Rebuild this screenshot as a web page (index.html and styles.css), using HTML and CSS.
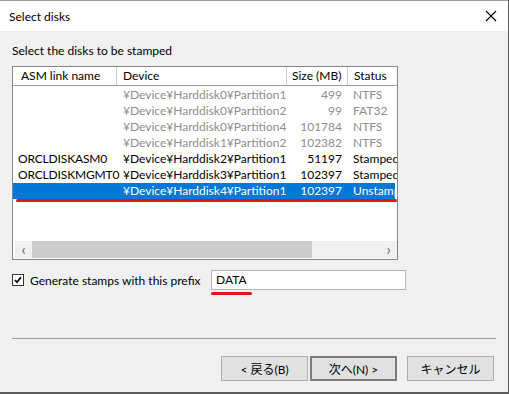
FILE: index.html
```html
<!DOCTYPE html>
<html lang="ja">
<head>
    <meta charset="UTF-8">
    <title>Select disks</title>
    <link rel="stylesheet" href="styles.css">
</head>
<body>
    <div class="window">
        <header class="titlebar">
            <span class="title">Select disks</span>
            <svg class="close" width="12" height="12" viewBox="0 0 12 12">
                <path d="M1 1 L11 11 M11 1 L1 11" stroke="#000" stroke-width="1.1" fill="none"/>
            </svg>
        </header>
        <section class="content">
            <p class="caption">Select the disks to be stamped</p>
            <div class="listview">
                <div class="list-header">
                    <div class="hcell">ASM link name</div>
                    <div class="hcell">Device</div>
                    <div class="hcell">Size (MB)</div>
                    <div class="hcell">Status</div>
                </div>
                <div class="list-body">
                    <div class="row disabled">
                        <div class="cell"></div>
                        <div class="cell">¥Device¥Harddisk0¥Partition1</div>
                        <div class="cell num">499</div>
                        <div class="cell">NTFS</div>
                    </div>
                    <div class="row disabled">
                        <div class="cell"></div>
                        <div class="cell">¥Device¥Harddisk0¥Partition2</div>
                        <div class="cell num">99</div>
                        <div class="cell">FAT32</div>
                    </div>
                    <div class="row disabled">
                        <div class="cell"></div>
                        <div class="cell">¥Device¥Harddisk0¥Partition4</div>
                        <div class="cell num">101784</div>
                        <div class="cell">NTFS</div>
                    </div>
                    <div class="row disabled">
                        <div class="cell"></div>
                        <div class="cell">¥Device¥Harddisk1¥Partition2</div>
                        <div class="cell num">102382</div>
                        <div class="cell">NTFS</div>
                    </div>
                    <div class="row">
                        <div class="cell">ORCLDISKASM0</div>
                        <div class="cell">¥Device¥Harddisk2¥Partition1</div>
                        <div class="cell num">51197</div>
                        <div class="cell">Stamped</div>
                    </div>
                    <div class="row">
                        <div class="cell">ORCLDISKMGMT0</div>
                        <div class="cell">¥Device¥Harddisk3¥Partition1</div>
                        <div class="cell num">102397</div>
                        <div class="cell">Stamped</div>
                    </div>
                    <div class="row selected">
                        <div class="cell"></div>
                        <div class="cell">¥Device¥Harddisk4¥Partition1</div>
                        <div class="cell num">102397</div>
                        <div class="cell">Unstamped</div>
                    </div>
                    <span class="mark mark-row"></span>
                </div>
                <div class="hscroll">
                    <span class="arrow">&lsaquo;</span>
                    <div class="track"><div class="thumb"></div></div>
                    <span class="arrow">&rsaquo;</span>
                </div>
            </div>
            <div class="prefix-row">
                <label class="check">
                    <span class="box">
                        <svg width="8" height="8" viewBox="0 0 8 8">
                            <path d="M1 4 L3 6.2 L7 1.2" stroke="#000" stroke-width="1.8" fill="none"/>
                        </svg>
                    </span>
                    Generate stamps with this prefix
                </label>
                <div class="prefix-field">
                    <span class="prefix-text">DATA</span>
                    <span class="mark mark-prefix"></span>
                </div>
            </div>
        </section>
        <div class="separator"></div>
        <footer class="buttons">
            <button class="btn">&lt; 戻る(B)</button>
            <button class="btn default">次へ(N) &gt;</button>
            <button class="btn cancel">キャンセル</button>
        </footer>
    </div>
</body>
</html>
```

FILE: styles.css
```css
html, body {
    margin: 0;
    padding: 0;
}
body {
    width: 509px;
    height: 394px;
    overflow: hidden;
    background-color: #5c5c5c;
    font-family: Lato, 'Noto Sans CJK JP', sans-serif;
    font-size: 12px;
    color: black;
}
.window {
    box-sizing: border-box;
    width: 508px;
    height: 392px;
    background-color: #f0f0f0;
    border-top: 1px solid #9a9a9a;
    display: flex;
    flex-direction: column;
}
.titlebar {
    height: 30px;
    background-color: white;
    display: flex;
    align-items: center;
    justify-content: space-between;
    padding: 0 11px 0 9px;
    flex-shrink: 0;
}
.title {
    font-size: 12px;
}
.content {
    padding: 12px 12px 0 12px;
}
.caption {
    margin: 0;
    line-height: 16px;
}
.listview {
    margin-top: 7px;
    width: 384px;
    height: 192px;
    border: 1px solid #828790;
    background-color: white;
    display: flex;
    flex-direction: column;
    position: relative;
    overflow: hidden;
}
.list-header,
.row {
    display: grid;
    grid-template-columns: 102px 170px 61px 80px;
    padding-left: 2px;
}
.list-header {
    height: 18px;
    border-bottom: 1px solid #a0a0a0;
    line-height: 18px;
}
.hcell {
    padding-left: 6px;
    border-right: 1px solid #c8c8c8;
    white-space: nowrap;
}
.hcell:nth-child(3) {
    padding-left: 5px;
}
.list-body {
    flex: 1;
    padding-top: 1px;
    position: relative;
}
.row {
    height: 16px;
    line-height: 16px;
    width: 380px;
}
.cell {
    white-space: nowrap;
    overflow: hidden;
    padding-left: 4px;
}
.cell:first-child {
    overflow: visible;
    padding-left: 3px;
    letter-spacing: -0.15px;
}
.cell:nth-child(2) {
    padding-left: 6px;
}
.cell:nth-child(4) {
    padding-left: 5px;
}
.cell.num {
    text-align: right;
    padding-right: 6px;
    padding-left: 0;
}
.row.disabled {
    color: #8d8d8d;
}
.row.selected {
    background-color: #0078d7;
    color: white;
}
.mark {
    position: absolute;
    background-color: #e8141c;
    border-radius: 2px;
    height: 3px;
}
.mark-row {
    left: 3px;
    right: 0;
    top: 113px;
}
.hscroll {
    height: 17px;
    display: flex;
    align-items: center;
    background-color: #f0f0f0;
    margin: 0 0 1px 2px;
}
.arrow {
    width: 17px;
    text-align: center;
    color: #606060;
    font-size: 15px;
    line-height: 17px;
}
.track {
    flex: 1;
    height: 17px;
}
.thumb {
    width: 280px;
    height: 17px;
    background-color: #cdcdcd;
}
.prefix-row {
    display: flex;
    align-items: center;
    margin-top: 10px;
}
.check {
    display: flex;
    align-items: center;
    gap: 6px;
    width: 199px;
    white-space: nowrap;
}
.box {
    box-sizing: border-box;
    width: 12px;
    height: 12px;
    border: 1px solid #333;
    background-color: white;
    display: flex;
    align-items: center;
    justify-content: center;
}
.prefix-field {
    box-sizing: border-box;
    width: 195px;
    height: 20px;
    border: 1px solid #b4b4b4;
    background-color: white;
    position: relative;
    padding-left: 4px;
    line-height: 18px;
}
.mark-prefix {
    left: -1px;
    width: 41px;
    top: 21px;
}
.separator {
    margin: 48px 12px 0 12px;
    height: 1px;
    background-color: #a0a0a0;
    width: 484px;
}
.buttons {
    display: flex;
    padding: 17px 0 0 221px;
}
.btn {
    width: 87px;
    height: 25px;
    background-color: #e1e1e1;
    border: 1px solid #adadad;
    font-family: Lato, 'Noto Sans CJK JP', sans-serif;
    font-size: 12px;
    padding: 0;
    margin-right: 2px;
}
.btn.default {
    border: 2px solid #7a7a7a;
}
.btn.cancel {
    margin-left: 8px;
}
```
